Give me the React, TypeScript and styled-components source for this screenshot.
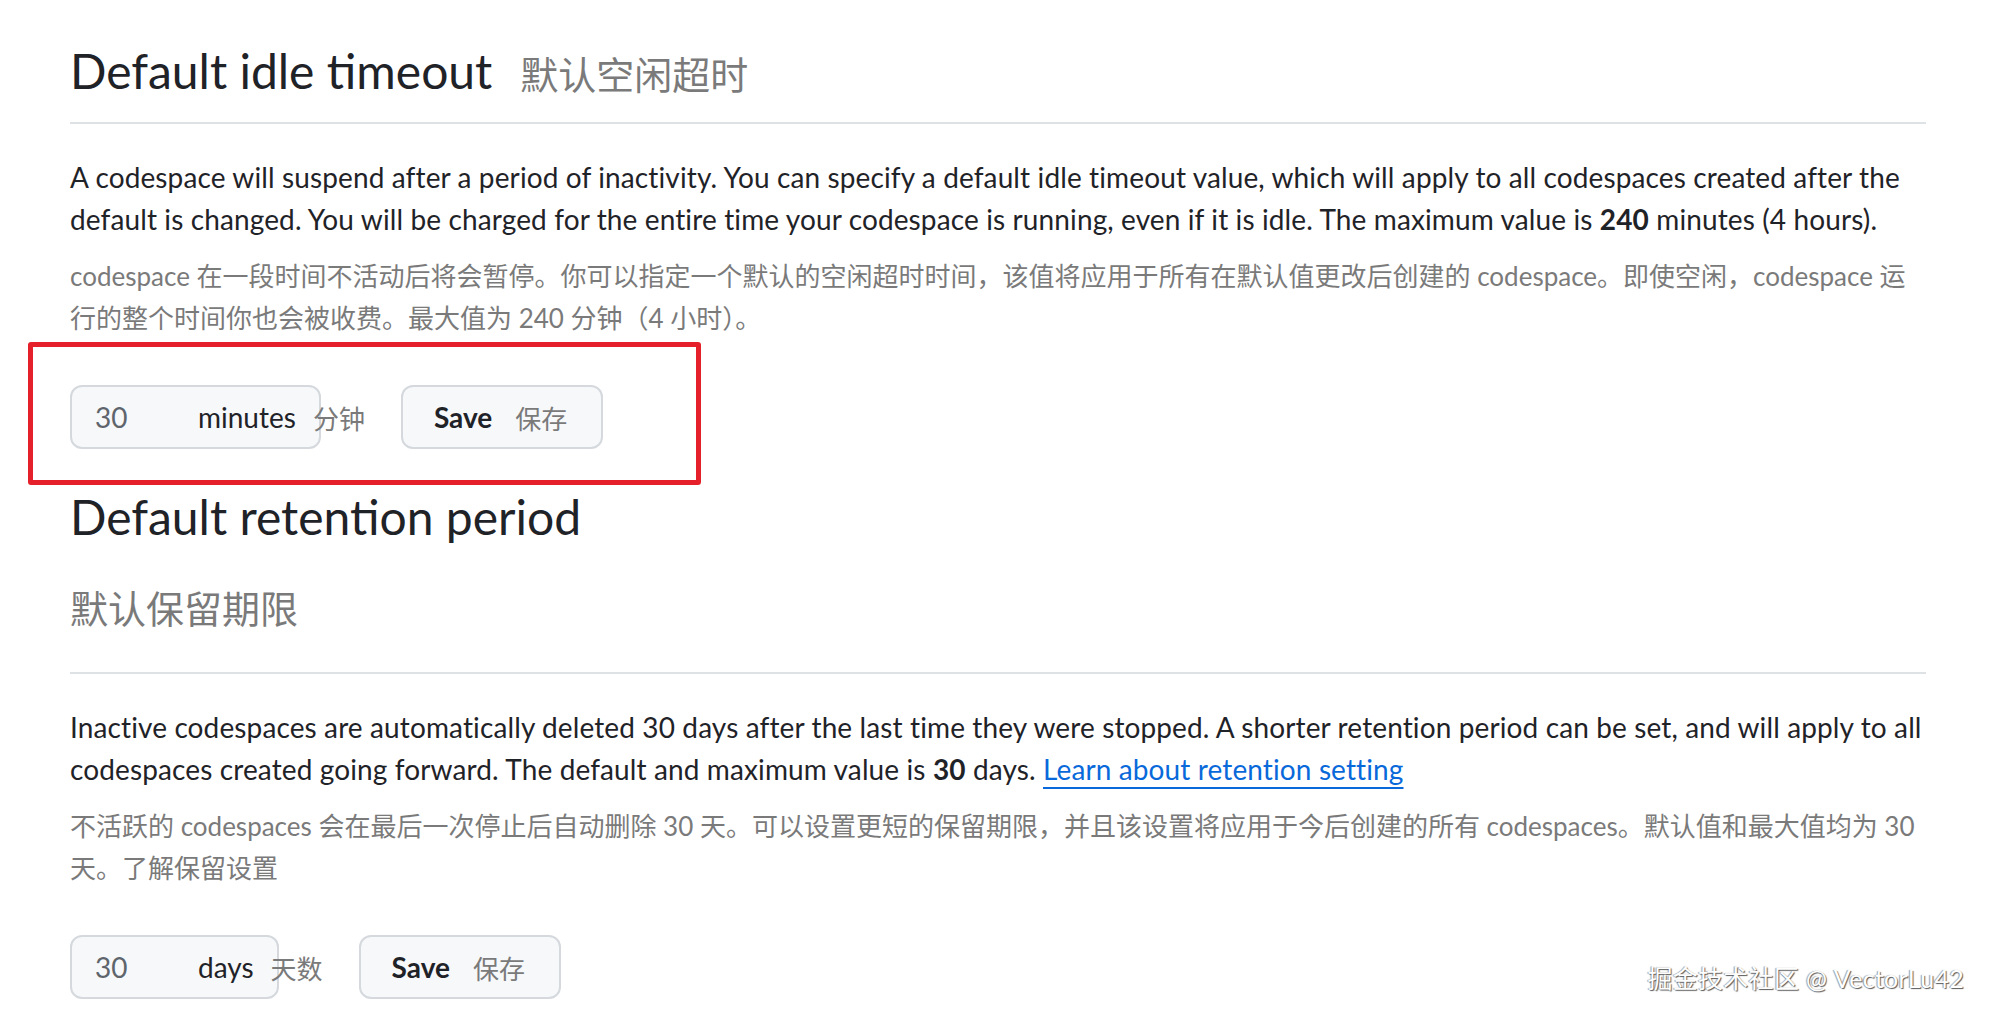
import React from "react";
import styled, { createGlobalStyle } from "styled-components";

const Global = createGlobalStyle`
  html, body { margin: 0; padding: 0; background: #ffffff; }
  body {
    font-family: "Lato", "Noto Sans CJK SC", sans-serif;
    color: #1f2328;
  }
`;

const Page = styled.div`
  position: relative;
  width: 1991px;
  height: 1021px;
  overflow: hidden;
  box-sizing: border-box;
  padding: 0 65px 0 70px;
`;

const Subhead = styled.div<{ $top: number; $pad: number }>`
  margin-top: ${(p) => p.$top}px;
  padding-bottom: ${(p) => p.$pad}px;
  border-bottom: 2px solid #dfe2e5;
`;

const Title = styled.h2`
  margin: 0;
  font-size: 48px;
  line-height: 60px;
  font-weight: 400;
  color: #1f2328;
`;

const TitleTrans = styled.span<{ $block?: boolean }>`
  font-family: "Noto Sans CJK SC", sans-serif;
  font-size: 38px;
  color: #7a7a7a;
  font-weight: 400;
  ${(p) =>
    p.$block
      ? `display: block; line-height: 48px; margin-top: 36px;`
      : `margin-left: 28px; line-height: 60px;`}
`;

const Para = styled.p`
  margin: 32px 0 0;
  font-size: 28px;
  line-height: 42px;
  letter-spacing: 0.12px;
  color: #1f2328;
`;

const Trans = styled.p`
  margin: 15px 0 0;
  font-size: 26px;
  line-height: 42px;
  color: #7a7a7a;
`;

const Link = styled.a`
  color: #0969da;
  text-decoration: underline;
  text-decoration-thickness: 2px;
  text-underline-offset: 7px;
`;

const FormRow = styled.div`
  position: relative;
  display: flex;
  align-items: center;
  margin-top: 46px;
`;

const Highlight = styled.div`
  position: absolute;
  left: -42px;
  top: -43px;
  width: 673px;
  height: 143px;
  box-sizing: border-box;
  border: 5px solid #e5202b;
  border-radius: 3px;
  pointer-events: none;
`;

const InputBox = styled.div`
  display: inline-flex;
  align-items: center;
  box-sizing: border-box;
  height: 64px;
  padding: 0 6px 0 23px;
  background: #f6f8fa;
  border: 2px solid #d5d9dd;
  border-radius: 12px;
`;

const Num = styled.span`
  width: 103px;
  font-size: 28px;
  color: #5f656c;
`;

const Unit = styled.span`
  font-size: 28px;
  color: #1f2328;
`;

const UnitTrans = styled.span`
  width: 0;
  margin-left: 17px;
  white-space: nowrap;
  font-size: 26px;
  color: #7a7a7a;
`;

const Button = styled.button`
  display: inline-flex;
  align-items: center;
  gap: 23px;
  box-sizing: border-box;
  height: 64px;
  margin-left: 80px;
  padding: 0 34px 0 31px;
  background: #f6f8fa;
  border: 2px solid #d5d9dd;
  border-radius: 12px;
  font-family: inherit;
  cursor: pointer;
`;

const BtnLabel = styled.span`
  font-size: 28px;
  font-weight: 700;
  color: #1f2328;
`;

const BtnTrans = styled.span`
  font-size: 26px;
  color: #7a7a7a;
`;

const Watermark = styled.div`
  position: absolute;
  right: 27px;
  bottom: 26px;
  font-size: 25px;
  color: #ffffff;
  text-shadow: 1px 1px 1px #5a5a5a, -1px 0 1px #9a9a9a;
  letter-spacing: 0.3px;
`;

export default function App() {
  return (
    <Page>
      <Global />
      <Subhead $top={41} $pad={19}>
        <Title>
          Default idle timeout<TitleTrans>默认空闲超时</TitleTrans>
        </Title>
      </Subhead>
      <Para>
        A codespace will suspend after a period of inactivity. You can specify a default idle
        timeout value, which will apply to all codespaces created after the default is changed.
        You will be charged for the entire time your codespace is running, even if it is idle.
        The maximum value is <strong>240</strong> minutes (4 hours).
      </Para>
      <Trans>
        codespace 在一段时间不活动后将会暂停。你可以指定一个默认的空闲超时时间，该值将应用于所有在默认值更改后创建的
        codespace。即使空闲，codespace 运行的整个时间你也会被收费。最大值为 240 分钟（4 小时）。
      </Trans>
      <FormRow>
        <Highlight />
        <InputBox>
          <Num>30</Num>
          <Unit>minutes</Unit>
          <UnitTrans>分钟</UnitTrans>
        </InputBox>
        <Button>
          <BtnLabel>Save</BtnLabel>
          <BtnTrans>保存</BtnTrans>
        </Button>
      </FormRow>

      <Subhead $top={38} $pad={41}>
        <Title>
          Default retention period
          <TitleTrans $block>默认保留期限</TitleTrans>
        </Title>
      </Subhead>
      <Para>
        Inactive codespaces are automatically deleted 30 days after the last time they were
        stopped. A shorter retention period can be set, and will apply to all codespaces created
        going forward. The default and maximum value is <strong>30</strong> days.{" "}
        <Link href="#">Learn about retention setting</Link>
      </Para>
      <Trans>
        不活跃的 codespaces 会在最后一次停止后自动删除 30
        天。可以设置更短的保留期限，并且该设置将应用于今后创建的所有 codespaces。默认值和最大值均为 30
        天。了解保留设置
      </Trans>
      <FormRow>
        <InputBox>
          <Num>30</Num>
          <Unit>days</Unit>
          <UnitTrans>天数</UnitTrans>
        </InputBox>
        <Button>
          <BtnLabel>Save</BtnLabel>
          <BtnTrans>保存</BtnTrans>
        </Button>
      </FormRow>
      <Watermark>掘金技术社区 @ VectorLu42</Watermark>
    </Page>
  );
}
